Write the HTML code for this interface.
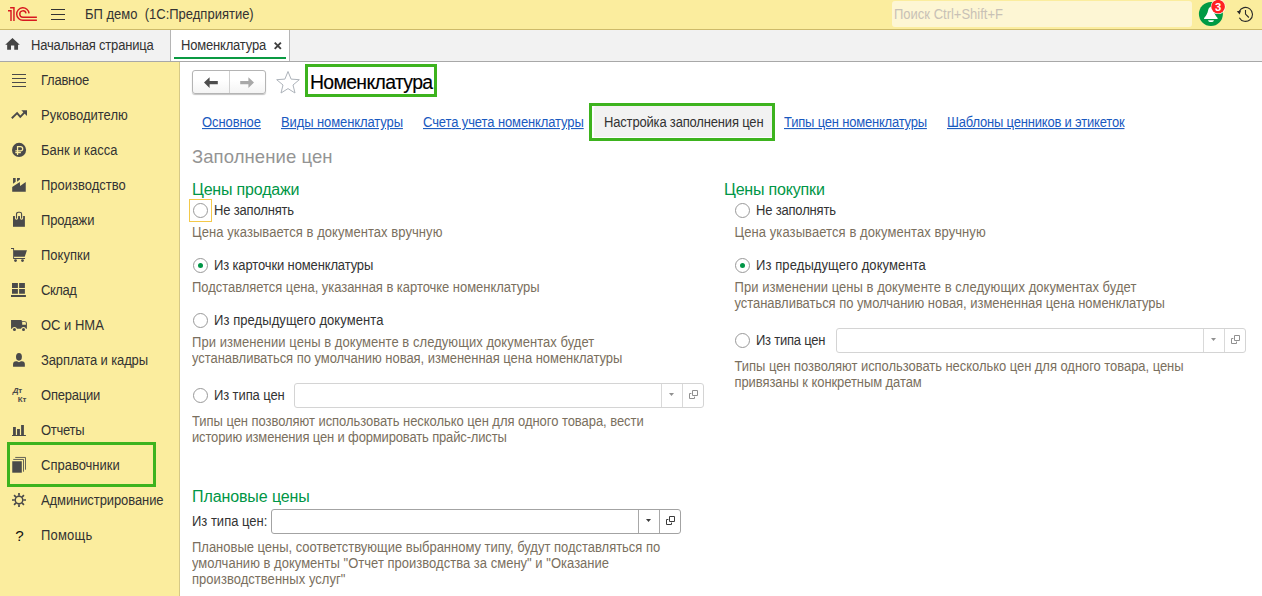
<!DOCTYPE html>
<html lang="ru">
<head>
<meta charset="utf-8">
<title>Номенклатура</title>
<style>
*{box-sizing:border-box;margin:0;padding:0}
html,body{width:1262px;height:596px;overflow:hidden;background:#fff}
body{font-family:"Liberation Sans",Arial,sans-serif;font-size:13px;color:#333;position:relative}
.abs{position:absolute;white-space:nowrap}
#topbar{position:absolute;left:0;top:0;width:1262px;height:30px;background:#fbed9e;border-bottom:1px solid #cdba6a}
#tabbar{position:absolute;left:0;top:30px;width:1262px;height:32px;background:#f2f2f2;border-bottom:1px solid #a8a8a8}
#sidebar{position:absolute;left:0;top:62px;width:180px;height:534px;background:#fbed9e;border-right:1px solid #d6c987}
#main{position:absolute;left:180px;top:62px;width:1082px;height:534px;background:#fff}
.ico{position:absolute;left:9px;width:20px;height:20px}
.lnk{position:absolute;font-size:13px;line-height:16px;color:#1959bf;text-decoration:underline;white-space:nowrap}
.lbl{position:absolute;font-size:13px;line-height:16px;color:#333;white-space:nowrap}
.desc{position:absolute;font-size:13px;line-height:16px;color:#7a6f5e;white-space:nowrap}
.lbl,.desc,.lnk{transform:scaleY(1.07);transform-origin:0 12.5px}
.big{transform:none}
.grp{position:absolute;font-size:16px;line-height:18px;color:#009646;white-space:nowrap}
.radio{position:absolute;width:15px;height:15px;border:1px solid #999;border-radius:50%;background:#fff}
.radio.on::after{content:"";position:absolute;left:4px;top:4px;width:5px;height:5px;border-radius:50%;background:#009646}
.inp{position:absolute;height:25px;border:1px solid #d4d4d4;border-radius:3px;background:#fff}
.inp.act{border-color:#a3a3a3}
.inp i{position:absolute;top:0;bottom:0;width:1px;background:#d9d9d9}
.inp.act i{background:#a8a8a8}
</style>
</head>
<body>
<div id="topbar"></div>
<div id="tabbar"></div>
<div id="sidebar"></div>
<div id="main"></div>
<svg class="ico" style="top:70px" viewBox="0 0 20 20"><path d="M3 4.5h14M3 8.5h14M3 12.5h14M3 16.5h14" stroke="#4a4a4a" stroke-width="1" fill="none"/></svg>
<div class="lbl" style="left:41px;top:72.5px;letter-spacing:-0.233px;">Главное</div>
<svg class="ico" style="top:105px" viewBox="0 0 20 20"><path d="M2.8 13.3l5.3-5.2 3.2 3.8 5-5.2" stroke="#4a4a4a" stroke-width="1.9" fill="none" stroke-linejoin="miter"/><path d="M12.3 5.2h5.7v5.7z" fill="#4a4a4a"/></svg>
<div class="lbl" style="left:41px;top:107.5px;">Руководителю</div>
<svg class="ico" style="top:140px" viewBox="0 0 20 20"><circle cx="10.05" cy="9.9" r="7.05" fill="#4a4a4a"/><path d="M8.55 14.9v-8.3h3a2.1 2.1 0 0 1 0 4.3h-5.2M6.3 12.6h5.6" stroke="#fbed9e" stroke-width="1.25" fill="none"/></svg>
<div class="lbl" style="left:41px;top:142.5px;">Банк и касса</div>
<svg class="ico" style="top:175px" viewBox="0 0 20 20"><path d="M3.2 16.8v-4.9l7.6-4.8 0.3 4 5.65-4.05v9.75zM4.05 3h2.6v3.65l-2.6 2zM8.05 3h2.85v1.45l-2.85 2.2z" fill="#4a4a4a"/></svg>
<div class="lbl" style="left:41px;top:177.5px;">Производство</div>
<svg class="ico" style="top:210px" viewBox="0 0 20 20"><path d="M4 6.3h11.9v10.5h-11.9z" fill="#4a4a4a"/><path d="M7.5 8.1v-4a1.9 1.9 0 0 1 1.9-1.9h1.3a1.9 1.9 0 0 1 1.9 1.9v4" stroke="#fbed9e" stroke-width="3.2" fill="none" stroke-linecap="round"/><path d="M4 6.3h2v1h-2zM9.2 6.3h1.7v1h-1.7zM13.9 6.3h2v1h-2z" fill="#4a4a4a"/><path d="M7.5 8.1v-4a1.9 1.9 0 0 1 1.9-1.9h1.3a1.9 1.9 0 0 1 1.9 1.9v4" stroke="#4a4a4a" stroke-width="1.1" fill="none" stroke-linecap="round"/></svg>
<div class="lbl" style="left:41px;top:212.5px;letter-spacing:-0.15px;">Продажи</div>
<svg class="ico" style="top:245px" viewBox="0 0 20 20"><path d="M2 3h3.05v10h11v0.9h-11.9v-9.9h-2.15zM5.05 5.25h12.9l-2.2 6.45h-10.7z" fill="#4a4a4a"/><circle cx="6.5" cy="15.6" r="1.45" fill="#4a4a4a"/><circle cx="13.5" cy="15.6" r="1.45" fill="#4a4a4a"/></svg>
<div class="lbl" style="left:41px;top:247.5px;">Покупки</div>
<svg class="ico" style="top:280px" viewBox="0 0 20 20"><path d="M3 3h5.9v4.9h-5.9zM10.1 3h5.8v4.9h-5.8zM3 9.05h5.9v4.8h-5.9zM10.1 9.05h5.8v4.8h-5.8zM2 15.1h14.9v1.8h-14.9z" fill="#4a4a4a"/></svg>
<div class="lbl" style="left:41px;top:282.5px;letter-spacing:-0.45px;">Склад</div>
<svg class="ico" style="top:315px" viewBox="0 0 20 20"><path d="M2.05 5.05h10.65v1.2h3.2a2 2 0 0 1 2 2v5.45h-15.85z" fill="#4a4a4a"/><path d="M13.2 7.1h2.5a1.2 1.2 0 0 1 1.2 1.2v1.4h-3.7z" fill="#fbed9e"/><circle cx="5.45" cy="14.5" r="2.5" fill="#fbed9e"/><circle cx="14.5" cy="14.5" r="2.5" fill="#fbed9e"/><circle cx="5.45" cy="14.5" r="1.5" fill="#4a4a4a"/><circle cx="14.5" cy="14.5" r="1.5" fill="#4a4a4a"/></svg>
<div class="lbl" style="left:41px;top:317.5px;">ОС и НМА</div>
<svg class="ico" style="top:350px" viewBox="0 0 20 20"><ellipse cx="9.95" cy="6.85" rx="2.95" ry="3.85" fill="#4a4a4a"/><path d="M4.05 16.85v-2.7a3 3 0 0 1 3-3h0.9l2 1 2-1h0.9a3 3 0 0 1 3 3v2.7z" fill="#4a4a4a"/></svg>
<div class="lbl" style="left:41px;top:352.5px;letter-spacing:-0.113px;">Зарплата и кадры</div>
<svg class="ico" style="top:385px" viewBox="0 0 20 20"><text x="3.7" y="8.2" font-family="Liberation Sans,sans-serif" font-weight="bold" font-style="italic" font-size="8" fill="#4a4a4a">Д</text><text x="9.3" y="7.7" font-family="Liberation Sans,sans-serif" font-weight="bold" font-size="8" fill="#4a4a4a">т</text><text x="8.8" y="16.7" font-family="Liberation Sans,sans-serif" font-weight="bold" font-size="8" fill="#4a4a4a">К</text><text x="13.4" y="16.7" font-family="Liberation Sans,sans-serif" font-weight="bold" font-size="8" fill="#4a4a4a">т</text></svg>
<div class="lbl" style="left:41px;top:387.5px;letter-spacing:-0.214px;">Операции</div>
<svg class="ico" style="top:420px" viewBox="0 0 20 20"><path d="M4.05 7.05h2.8v8.1h-2.8zM8.05 9.05h2.85v6.1h-2.85zM12.1 5.05h2.8v10.1h-2.8zM3 15.1h13.9v0.85h-13.9z" fill="#4a4a4a"/></svg>
<div class="lbl" style="left:41px;top:422.5px;letter-spacing:-0.28px;">Отчеты</div>
<svg class="ico" style="top:455px" viewBox="0 0 20 20"><path d="M3.25 6.25h9.55v11.45h-9.55z" fill="#4a4a4a"/><path d="M4.25 4.45h10.25v12.25M6.25 2.45h10.25v12.25" stroke="#4a4a4a" stroke-width="0.85" fill="none"/></svg>
<div class="lbl" style="left:41px;top:457.5px;">Справочники</div>
<svg class="ico" style="top:490px" viewBox="0 0 20 20"><g fill="none" stroke="#4a4a4a"><circle cx="10" cy="10" r="3.75" stroke-width="1.45"/><path d="M10 3v2.8M10 14.2v2.8M3 10h2.8M14.2 10h2.8M5.05 5.05l1.98 1.98M12.97 12.97l1.98 1.98M5.05 14.95l1.98-1.98M12.97 7.03l1.98-1.98" stroke-width="1.7"/></g></svg>
<div class="lbl" style="left:41px;top:492.5px;letter-spacing:-0.087px;">Администрирование</div>
<svg class="ico" style="top:525px" viewBox="0 0 20 20"><text x="10.4" y="15.7" text-anchor="middle" font-family="Liberation Sans,sans-serif" font-size="15.2" fill="#111">?</text></svg>
<div class="lbl" style="left:41px;top:527.5px;letter-spacing:0.2px;">Помощь</div>
<div class="abs" style="left:7px;top:442px;width:149px;height:45px;border:3px solid #3db31e"></div>
<svg class="abs" style="left:0;top:0" width="80" height="30" viewBox="0 0 80 30"><g fill="none" stroke="#d81920" stroke-width="1.45"><path d="M10.1 7.7h3.85v13.2"/><path d="M8 10.8h3v10.1"/><path d="M36.9 20.2h-14a6.2 6.2 0 1 1 6.15-6.9"/><path d="M36.9 17.15h-14a3.15 3.15 0 1 1 3.1-3.8"/></g><path d="M51 9.5h14M51 14.5h14M51 19.5h14" stroke="#333" stroke-width="1"/></svg>
<div class="lbl" style="left:85px;top:7px;white-space:pre">БП демо  (1С:Предприятие)</div>
<div class="abs" style="left:892px;top:1px;width:300px;height:26px;background:#fdf6d4;border-radius:3px"></div>
<div class="lbl" style="left:894px;top:7px;color:#c8c1b6">Поиск Ctrl+Shift+F</div>
<svg class="abs" style="left:1192px;top:0" width="70" height="30" viewBox="1192 0 70 30"><circle cx="1210.9" cy="13.95" r="12" fill="#009a44"/><path d="M1210.85 7c-1.6 0-2.3 1.3-2.7 3.2c-0.7 3.2-1.8 5.4-3.6 7.2c-0.9 0.9-0.6 1.5 0.3 1.5h12c0.9 0 1.2-0.6 0.3-1.5c-1.8-1.8-2.9-4-3.6-7.2c-0.4-1.9-1.1-3.2-2.7-3.2z" fill="#fff"/><path d="M1208.1 20.2h5.8a2.9 1.8 0 0 1-5.8 0z" fill="#fff"/><circle cx="1218.1" cy="6.65" r="7.4" fill="#fff"/><circle cx="1218.1" cy="6.65" r="6.8" fill="#ff2121"/><text x="1218.2" y="10.9" text-anchor="middle" font-family="Liberation Sans,sans-serif" font-weight="bold" font-size="11.2" fill="#fff">3</text><g fill="none" stroke="#2b2b2b" stroke-width="1.1"><path d="M1239.33 17.7A7 7 0 1 0 1239.18 11.4"/><path d="M1245.5 10v4.1l3.35 3.4"/></g><path d="M1236.8 11.3l4.3-0.8-1.5 3.9z" fill="#2b2b2b"/></svg>
<svg class="abs" style="left:0;top:30px" width="30" height="30" viewBox="0 30 30 30"><path d="M12.45 38.05l7.35 6.6h-1.75v5.15h-3.8v-4.2h-3.25v4.2h-3.85v-5.15h-1.95z" fill="#454545"/></svg>
<div class="lbl" style="left:31px;top:38px;letter-spacing:-0.176px;">Начальная страница</div>
<div class="abs" style="left:170px;top:30px;width:120px;height:31px;background:#fff;border-left:1px solid #b5b5b5;border-right:1px solid #b5b5b5"></div>
<div class="abs" style="left:174px;top:57px;width:112px;height:2px;background:#0a9a42"></div>
<div class="lbl" style="left:181px;top:38px;letter-spacing:-0.182px;">Номенклатура</div>
<svg class="abs" style="left:274px;top:42.4px" width="8" height="8" viewBox="0 0 8 8"><path d="M0.7 0.7l6.2 6.2M6.9 0.7l-6.2 6.2" stroke="#3f3f3f" stroke-width="1.9"/></svg>
<div class="abs" style="left:192px;top:70px;width:74px;height:24px;border:1px solid #b4b4b4;border-radius:3px;background:linear-gradient(#fff 40%,#f4f4f4);box-shadow:0 1px 1px #c4c4c4"></div>
<div class="abs" style="left:229px;top:71px;width:1px;height:22px;background:#d0d0d0"></div>
<svg class="abs" style="left:203px;top:77px" width="16" height="12" viewBox="0 0 16 12"><path d="M1 5.6l5.6-5.3v3.7h8.2v3.2h-8.2v3.7z" fill="#4d4d4d"/></svg>
<svg class="abs" style="left:239px;top:77px" width="16" height="12" viewBox="0 0 16 12"><path d="M15 5.6l-5.6-5.3v3.7h-8.2v3.2h8.2v3.7z" fill="#a8a8a8"/></svg>
<svg class="abs" style="left:275.2px;top:69.6px" width="26" height="24" viewBox="0 0 26 24"><path d="M13 1.5l3.1 7.6 8.2 0.6-6.3 5.3 2 8-7-4.4-7 4.4 2-8-6.3-5.3 8.2-0.6z" fill="#fff" stroke="#adb3ba" stroke-width="1"/></svg>
<div class="abs" style="left:305px;top:64px;width:132px;height:33px;border:3px solid #3db31e;background:#fff"></div>
<div class="lbl big" style="left:310px;top:71px;letter-spacing:-0.636px;font-size:19.4px;line-height:22px;color:#000;-webkit-text-stroke:0.15px #000">Номенклатура</div>
<div class="lnk" style="left:202px;top:115px;letter-spacing:-0.086px;">Основное</div>
<div class="lnk" style="left:281px;top:115px;letter-spacing:-0.1px;">Виды номенклатуры</div>
<div class="lnk" style="left:423px;top:115px;letter-spacing:-0.109px;">Счета учета номенклатуры</div>
<div class="lnk" style="left:784px;top:115px;letter-spacing:-0.2px;">Типы цен номенклатуры</div>
<div class="lnk" style="left:947px;top:115px;letter-spacing:-0.192px;">Шаблоны ценников и этикеток</div>
<div class="abs" style="left:589px;top:103px;width:186px;height:38px;border:3px solid #3db31e;background:#fff"></div><div class="abs" style="left:594px;top:106.4px;width:177.5px;height:31.1px;background:#f2f2f2;border-radius:2px 0 0 0"></div>
<div class="lbl" style="left:604px;top:115px;letter-spacing:-0.174px;">Настройка заполнения цен</div>
<div class="lbl big" style="left:192px;top:146px;letter-spacing:0.077px;font-size:18.5px;line-height:22px;color:#949494">Заполнение цен</div>
<div class="grp" style="left:192px;top:181px;letter-spacing:-0.182px;">Цены продажи</div>
<div class="abs" style="left:189px;top:199px;width:23px;height:23px;border:1px solid #f3c94a"></div>
<div class="radio" style="left:193px;top:203px"></div>
<div class="lbl" style="left:214px;top:203px;letter-spacing:-0.164px;">Не заполнять</div>
<div class="desc" style="left:192px;top:225px;letter-spacing:0.061px;">Цена указывается в документах вручную</div>
<div class="radio on" style="left:193px;top:258px"></div>
<div class="lbl" style="left:214px;top:258px;letter-spacing:-0.13px;">Из карточки номенклатуры</div>
<div class="desc" style="left:192px;top:280px;letter-spacing:-0.038px;">Подставляется цена, указанная в карточке номенклатуры</div>
<div class="radio" style="left:193px;top:313px"></div>
<div class="lbl" style="left:214px;top:313px;letter-spacing:0.078px;">Из предыдущего документа</div>
<div class="desc" style="left:192px;top:335px;letter-spacing:0.052px;">При изменении цены в документе в следующих документах будет</div>
<div class="desc" style="left:192px;top:351px;letter-spacing:-0.041px;">устанавливаться по умолчанию новая, измененная цена номенклатуры</div>
<div class="radio" style="left:193px;top:388px"></div>
<div class="lbl" style="left:214px;top:388px;letter-spacing:-0.1px;">Из типа цен</div>
<div class="inp" style="left:294px;top:383px;width:410px"><i style="right:41px"></i><i style="right:20px"></i><svg style="position:absolute;right:29px;top:9px" width="5" height="3" viewBox="0 0 5 3"><path d="M0 0h5l-2.5 3z" fill="#909090"/></svg><svg style="position:absolute;right:4px;top:6px" width="10" height="10" viewBox="0 0 10 10"><path d="M3.5 0.5h5v5h-5zM2.4 3.5h-1.9v5h5v-1.9" fill="none" stroke="#909090" stroke-width="1"/></svg></div>
<div class="desc" style="left:192px;top:414px;letter-spacing:-0.049px;">Типы цен позволяют использовать несколько цен для одного товара, вести</div>
<div class="desc" style="left:192px;top:430px;letter-spacing:-0.152px;">историю изменения цен и формировать прайс-листы</div>
<div class="grp" style="left:192px;top:488px;letter-spacing:-0.1px;">Плановые цены</div>
<div class="lbl" style="left:192px;top:514px;">Из типа цен:</div>
<div class="inp act" style="left:271px;top:509px;width:410px"><i style="right:41px"></i><i style="right:20px"></i><svg style="position:absolute;right:29px;top:9px" width="5" height="3" viewBox="0 0 5 3"><path d="M0 0h5l-2.5 3z" fill="#3c3c3c"/></svg><svg style="position:absolute;right:4px;top:6px" width="10" height="10" viewBox="0 0 10 10"><path d="M3.5 0.5h5v5h-5zM2.4 3.5h-1.9v5h5v-1.9" fill="none" stroke="#3c3c3c" stroke-width="1"/></svg></div>
<div class="desc" style="left:192px;top:540px;letter-spacing:-0.014px;">Плановые цены, соответствующие выбранному типу, будут подставляться по</div>
<div class="desc" style="left:192px;top:556px;letter-spacing:0.019px;">умолчанию в документы "Отчет производства за смену" и "Оказание</div>
<div class="desc" style="left:192px;top:572px;letter-spacing:0.036px;">производственных услуг"</div>
<div class="grp" style="left:724px;top:181px;letter-spacing:-0.182px;">Цены покупки</div>
<div class="radio" style="left:735px;top:203px"></div>
<div class="lbl" style="left:756px;top:203px;letter-spacing:-0.182px;">Не заполнять</div>
<div class="desc" style="left:734.5px;top:225px;letter-spacing:0.083px;">Цена указывается в документах вручную</div>
<div class="radio on" style="left:735px;top:258px"></div>
<div class="lbl" style="left:756px;top:258px;letter-spacing:0.096px;">Из предыдущего документа</div>
<div class="desc" style="left:734.5px;top:280px;letter-spacing:0.045px;">При изменении цены в документе в следующих документах будет</div>
<div class="desc" style="left:734.5px;top:296px;letter-spacing:-0.041px;">устанавливаться по умолчанию новая, измененная цена номенклатуры</div>
<div class="radio" style="left:735px;top:333px"></div>
<div class="lbl" style="left:756px;top:333px;letter-spacing:-0.22px;">Из типа цен</div>
<div class="inp" style="left:836px;top:328px;width:410px"><i style="right:41px"></i><i style="right:20px"></i><svg style="position:absolute;right:29px;top:9px" width="5" height="3" viewBox="0 0 5 3"><path d="M0 0h5l-2.5 3z" fill="#909090"/></svg><svg style="position:absolute;right:4px;top:6px" width="10" height="10" viewBox="0 0 10 10"><path d="M3.5 0.5h5v5h-5zM2.4 3.5h-1.9v5h5v-1.9" fill="none" stroke="#909090" stroke-width="1"/></svg></div>
<div class="desc" style="left:734.5px;top:359px;letter-spacing:-0.05px;">Типы цен позволяют использовать несколько цен для одного товара, цены</div>
<div class="desc" style="left:734.5px;top:375px;letter-spacing:-0.081px;">привязаны к конкретным датам</div>
</body>
</html>
